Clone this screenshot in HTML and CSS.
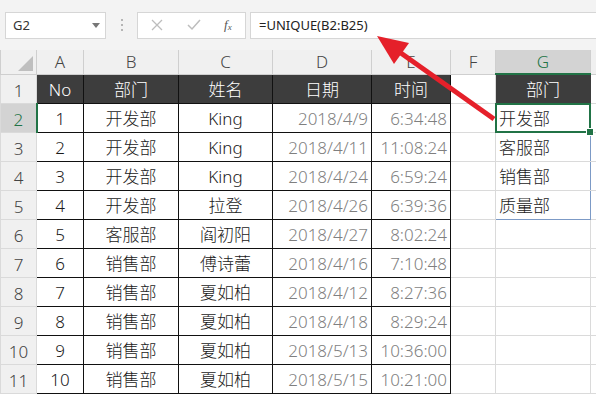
FILE: index.html
```html
<!DOCTYPE html>
<html lang="zh-CN">

<head>
    <meta charset="UTF-8">
    <title>UNIQUE</title>
    <link rel="stylesheet" href="styles.css">
</head>

<body>
    <div class="formula-bar">
        <div class="name-box">
            <span>G2</span>
            <svg class="caret" width="8" height="5" viewBox="0 0 8 5"><path d="M0 0h8L4 5z" fill="#777"/></svg>
        </div>
        <div class="grip"><i></i><i></i><i></i></div>
        <div class="fx-box">
            <svg width="12" height="12" viewBox="0 0 12 12"><path d="M1 1l10 10M11 1L1 11" stroke="#bdbdbd" stroke-width="1.3" fill="none"/></svg>
            <svg width="14" height="12" viewBox="0 0 14 12"><path d="M1 6l4 4 8-9" stroke="#bdbdbd" stroke-width="1.5" fill="none"/></svg>
            <span class="fx">f<sub>x</sub></span>
        </div>
        <div class="formula">=UNIQUE(B2:B25)</div>
    </div>

    <table class="sheet">
        <colgroup>
            <col class="c-hdr">
            <col class="c-a">
            <col class="c-b">
            <col class="c-c">
            <col class="c-d">
            <col class="c-e">
            <col class="c-f">
            <col class="c-g">
            <col class="c-h">
        </colgroup>
        <tr class="col-heads">
            <th class="corner"><span></span></th>
            <th>A</th>
            <th>B</th>
            <th>C</th>
            <th>D</th>
            <th>E</th>
            <th>F</th>
            <th class="active-col">G</th>
            <th></th>
        </tr>
        <tr>
            <th class="row-head">1</th>
            <td class="dark">No</td>
            <td class="dark">部门</td>
            <td class="dark">姓名</td>
            <td class="dark">日期</td>
            <td class="dark">时间</td>
            <td></td>
            <td class="dark g-head">部门</td>
            <td></td>
        </tr>
        <tr>
            <th class="row-head active-row">2</th>
            <td class="t">1</td>
            <td class="t">开发部</td>
            <td class="t">King</td>
            <td class="t num">2018/4/9</td>
            <td class="t num">6:34:48</td>
            <td></td>
            <td class="spill spill-top selected">开发部</td>
            <td></td>
        </tr>
        <tr>
            <th class="row-head">3</th>
            <td class="t">2</td>
            <td class="t">开发部</td>
            <td class="t">King</td>
            <td class="t num">2018/4/11</td>
            <td class="t num">11:08:24</td>
            <td></td>
            <td class="spill">客服部</td>
            <td></td>
        </tr>
        <tr>
            <th class="row-head">4</th>
            <td class="t">3</td>
            <td class="t">开发部</td>
            <td class="t">King</td>
            <td class="t num">2018/4/24</td>
            <td class="t num">6:59:24</td>
            <td></td>
            <td class="spill">销售部</td>
            <td></td>
        </tr>
        <tr>
            <th class="row-head">5</th>
            <td class="t">4</td>
            <td class="t">开发部</td>
            <td class="t">拉登</td>
            <td class="t num">2018/4/26</td>
            <td class="t num">6:39:36</td>
            <td></td>
            <td class="spill spill-bottom">质量部</td>
            <td></td>
        </tr>
        <tr>
            <th class="row-head">6</th>
            <td class="t">5</td>
            <td class="t">客服部</td>
            <td class="t">阎初阳</td>
            <td class="t num">2018/4/27</td>
            <td class="t num">8:02:24</td>
            <td></td>
            <td></td>
            <td></td>
        </tr>
        <tr>
            <th class="row-head">7</th>
            <td class="t">6</td>
            <td class="t">销售部</td>
            <td class="t">傅诗蕾</td>
            <td class="t num">2018/4/16</td>
            <td class="t num">7:10:48</td>
            <td></td>
            <td></td>
            <td></td>
        </tr>
        <tr>
            <th class="row-head">8</th>
            <td class="t">7</td>
            <td class="t">销售部</td>
            <td class="t">夏如柏</td>
            <td class="t num">2018/4/12</td>
            <td class="t num">8:27:36</td>
            <td></td>
            <td></td>
            <td></td>
        </tr>
        <tr>
            <th class="row-head">9</th>
            <td class="t">8</td>
            <td class="t">销售部</td>
            <td class="t">夏如柏</td>
            <td class="t num">2018/4/18</td>
            <td class="t num">8:29:24</td>
            <td></td>
            <td></td>
            <td></td>
        </tr>
        <tr>
            <th class="row-head">10</th>
            <td class="t">9</td>
            <td class="t">销售部</td>
            <td class="t">夏如柏</td>
            <td class="t num">2018/5/13</td>
            <td class="t num">10:36:00</td>
            <td></td>
            <td></td>
            <td></td>
        </tr>
        <tr>
            <th class="row-head">11</th>
            <td class="t">10</td>
            <td class="t">销售部</td>
            <td class="t">夏如柏</td>
            <td class="t num">2018/5/15</td>
            <td class="t num">10:21:00</td>
            <td></td>
            <td></td>
            <td></td>
        </tr>
    </table>

    <!-- red pointer from the spill range to the formula -->
    <svg class="arrow" width="596" height="396" viewBox="0 0 596 396">
        <line x1="398" y1="51" x2="494" y2="119" stroke="#e5202a" stroke-width="5"/>
        <polygon points="377,36 394,64 409,43" fill="#e5202a"/>
    </svg>
</body>

</html>
```

FILE: styles.css
```css
body {
    margin: 0;
    width: 596px;
    height: 396px;
    overflow: hidden;
    position: relative;
    background: #fff;
    font-family: "Noto Sans", "Noto Sans CJK SC", sans-serif;
}

/* formula bar */
.formula-bar {
    display: flex;
    align-items: center;
    height: 50px;
    padding: 0 0 0 5px;
    background: #f3f3f3;
    box-sizing: border-box;
}

.name-box {
    display: flex;
    align-items: center;
    justify-content: space-between;
    width: 101px;
    height: 27px;
    padding: 0 5px 0 7px;
    box-sizing: border-box;
    background: #fff;
    border: 1px solid #d6d6d6;
    font-size: 13px;
    color: #333;
}

.grip {
    display: flex;
    flex-direction: column;
    gap: 3px;
    margin: 0 14px 0 15px;
}

.grip i {
    width: 2px;
    height: 2px;
    background: #b5b5b5;
}

.fx-box {
    display: flex;
    align-items: center;
    width: 109px;
    height: 27px;
    box-sizing: border-box;
    padding-left: 13px;
    background: #fff;
    border: 1px solid #d6d6d6;
}

.fx-box svg:nth-child(2) {
    margin-left: 24px;
}

.fx {
    margin-left: 23px;
    font-family: "Liberation Serif", serif;
    font-style: italic;
    font-size: 13px;
    color: #555;
}

.fx sub {
    font-size: 9px;
    vertical-align: -1px;
}

.formula {
    flex: 1;
    height: 27px;
    margin-left: 4px;
    padding-left: 8px;
    box-sizing: border-box;
    background: #fff;
    border: 1px solid #d6d6d6;
    border-right: 0;
    font-size: 13px;
    line-height: 25px;
    color: #222;
}

/* grid */
.sheet {
    border-collapse: collapse;
    table-layout: fixed;
    width: 610px;
    font-size: 17px;
    font-weight: 300;
}

.c-hdr { width: 36px; }
.c-a { width: 47px; }
.c-b { width: 95px; }
.c-c { width: 94px; }
.c-d { width: 99px; }
.c-e { width: 79px; }
.c-f { width: 45px; }
.c-g { width: 95px; }
.c-h { width: 20px; }

.sheet tr {
    height: 29px;
}

.sheet td,
.sheet th {
    height: 29px;
    padding: 2px 0 0;
    border: 1px solid #dadada;
    box-sizing: border-box;
    white-space: nowrap;
    overflow: hidden;
    line-height: 24px;
}

.sheet tr.col-heads {
    height: 24px;
}

.col-heads th {
    height: 24px;
    padding: 0;
    background: #f0f0f0;
    border-color: #cfcfcf;
    border-top: 0;
    font-weight: 300;
    color: #444;
    font-size: 17px;
    line-height: 22px;
}

.corner {
    position: relative;
}

.corner span {
    position: absolute;
    right: 3px;
    bottom: 3px;
    width: 0;
    height: 0;
    border-left: 15px solid transparent;
    border-bottom: 15px solid #bfbfbf;
}

.col-heads th.active-col {
    background: #d3d3d3;
    color: #217346;
    border-bottom: 2px solid #217346;
}

.row-head {
    background: #f0f0f0;
    border-color: #cfcfcf;
    border-left: 0;
    font-weight: 300;
    color: #444;
    padding-top: 4px !important;
}

.row-head.active-row {
    background: #d3d3d3;
    color: #217346;
    border-right: 2px solid #217346;
}

.sheet td.t,
.sheet td.dark {
    border: 1px solid #111;
    text-align: center;
    color: #1a1a1a;
}

.sheet td.dark {
    background: #3d3d3d;
    color: #fff;
}

.sheet td.num {
    text-align: right;
    padding-right: 3px;
    color: #7f7f7f;
}

.sheet td.g-head {
    border-color: #3d3d3d;
    border-top: 1px solid #217346;
}

.spill {
    border-left: 1px solid #7c9ac6 !important;
    border-right: 1px solid #7c9ac6 !important;
    padding-left: 3px !important;
    text-align: left;
    color: #1a1a1a;
}

.spill-top {
    border-top: 1px solid #7c9ac6 !important;
}

.spill-bottom {
    border-bottom: 1px solid #7c9ac6 !important;
}

.selected {
    position: relative;
    overflow: visible !important;
}

.selected::after {
    content: "";
    position: absolute;
    left: -1px;
    top: -1px;
    right: -1px;
    bottom: -1px;
    border: 2px solid #217346;
}

.selected::before {
    content: "";
    position: absolute;
    right: -4px;
    bottom: -4px;
    width: 6px;
    height: 6px;
    background: #217346;
    border: 1px solid #fff;
    z-index: 1;
}

.arrow {
    position: absolute;
    left: 0;
    top: 0;
    pointer-events: none;
}
```
